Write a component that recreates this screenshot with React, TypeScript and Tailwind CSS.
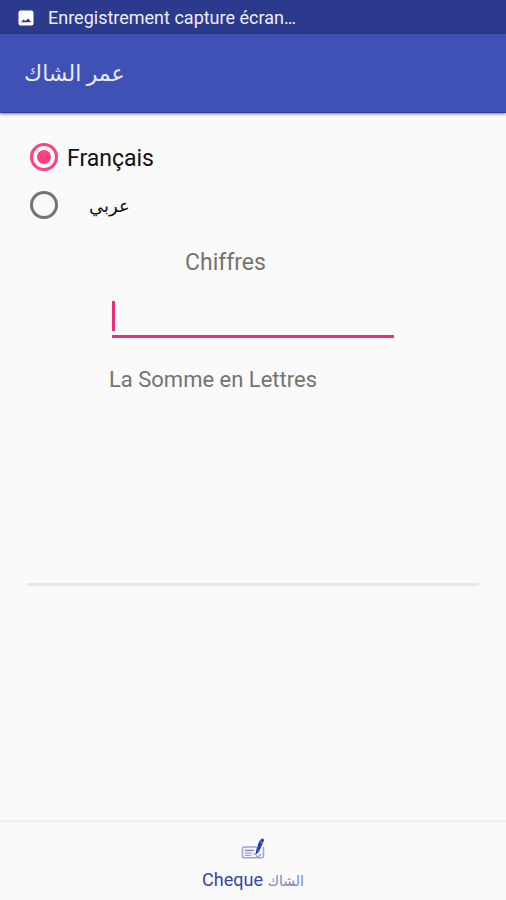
import { useState } from 'react';

type Language = 'fr' | 'ar';

const languages: { id: Language; label: string; className: string }[] = [
  { id: 'fr', label: 'Français', className: 'ml-[9px] pt-1 text-[23px]' },
  { id: 'ar', label: 'عربي', className: 'ml-[31px] pt-[2px] text-lg' },
];

function PictureIcon() {
  return (
    <svg viewBox="0 0 16 16" className="h-4 w-4" aria-hidden="true">
      <rect x="0.5" y="0.5" width="15" height="15" rx="2" fill="#fff" />
      <path d="M3 12.2 5.5 9.6 7.4 11 10.3 8.6 13 12.2Z" fill="#2c3a8e" />
    </svg>
  );
}

function ChequeIcon() {
  return (
    <svg viewBox="0 0 24 22" className="h-[22px] w-6" fill="none" aria-hidden="true">
      <path
        d="M16 9H3.2Q1.5 9 1.5 10.5V18.3Q1.5 19.8 3.2 19.8H20.8Q22.5 19.8 22.5 18.3V9"
        stroke="#9aa3da"
        strokeWidth="1.5"
      />
      <path d="M3.8 12.4H13" stroke="#7985c9" strokeWidth="1.4" />
      <path d="M3.8 15H11" stroke="#8c96d2" strokeWidth="1.1" />
      <path d="M3.8 17.3H10.5M12.5 17Q14 13.5 15 17.2T20 16" stroke="#9aa3d8" strokeWidth="1.2" />
      <path d="M21 3 16.8 12.2" stroke="#2c3fae" strokeWidth="3.4" />
      <path d="M15.1 11.6 18.5 13.2 14.8 16.8Z" fill="#2c3fae" />
      <path d="M19.2 2.8 17 7.6" stroke="#2c3fae" strokeWidth="1.2" />
      <circle cx="21.3" cy="2.3" r="1.7" fill="#2c3fae" />
      <path d="M19.2 3.9 21.9 5.1" stroke="#aab2e0" strokeWidth="0.7" />
    </svg>
  );
}

export default function App() {
  const [language, setLanguage] = useState<Language>('fr');
  const [amount, setAmount] = useState('');

  return (
    <div className="flex min-h-screen flex-col bg-[#fafafa] font-['Roboto','DejaVu_Sans',sans-serif]">
      <div className="flex h-[34px] items-center gap-[14px] bg-[#2c3a8e] px-[18px] pt-[2px] text-lg text-[#eceef8]">
        <PictureIcon />
        <span>Enregistrement capture écran…</span>
      </div>

      <header className="flex h-[79px] items-center border-b border-[#303f9f] bg-[#3f51b5] px-6 shadow-sm shadow-black/40">
        <h1 className="text-[22px] text-[#e8eaf6]">عمر الشاك</h1>
      </header>

      <main className="flex flex-1 flex-col px-[27px] pt-5">
        <fieldset aria-label="Langue">
          {languages.map(({ id, label, className }) => (
            <label key={id} className="flex h-12 items-center pl-[3px] text-[#111]">
              <input
                type="radio"
                name="language"
                value={id}
                checked={language === id}
                onChange={() => setLanguage(id)}
                className="grid h-7 w-7 shrink-0 appearance-none place-items-center rounded-full border-3 border-[#737373] before:h-[14px] before:w-[14px] before:rounded-full checked:border-[#ff4081] checked:before:bg-[#ff4081]"
              />
              <span className={className}>{label}</span>
            </label>
          ))}
        </fieldset>

        <label htmlFor="amount" className="mt-[18px] mr-[55px] self-center text-[23px] leading-8 text-[#737373]">
          Chiffres
        </label>
        <div className="relative mt-5 w-[282px] self-center">
          <input
            id="amount"
            type="text"
            inputMode="decimal"
            value={amount}
            onChange={(e) => setAmount(e.target.value)}
            className="block h-[39px] w-full border-b-3 border-[#ec2f74] bg-transparent pl-1 text-[23px] caret-[#ec2f74] outline-none"
          />
          {amount === '' && <span className="absolute top-[2px] left-0 h-[30px] w-[3px] bg-[#ec2f74]" />}
        </div>

        <h2 className="mt-[26px] mr-20 self-center text-[22px] leading-8 text-[#737373]">La Somme en Lettres</h2>
        <output htmlFor="amount" className="block h-[190px] border-b-3 border-[#e8e8e8]" />
      </main>

      <nav className="border-t-2 border-[#f0f0f0]">
        <button type="button" className="flex h-[78px] w-full flex-col items-center pt-4 text-lg text-[#3346ad]">
          <ChequeIcon />
          <span className="mt-2 leading-6">
            Cheque <span className="text-sm text-[#7985c9]">الشاك</span>
          </span>
        </button>
      </nav>
    </div>
  );
}
